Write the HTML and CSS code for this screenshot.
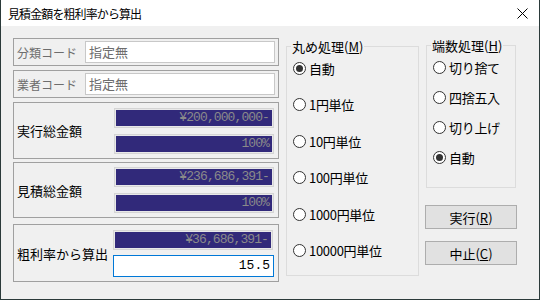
FILE: index.html
```html
<!DOCTYPE html>
<html lang="ja">
<head>
  <meta charset="UTF-8" />
  <title>見積金額を粗利率から算出</title>
  <link rel="stylesheet" href="styles.css">
</head>
<body>
  <div class="window">
    <header class="titlebar">
      <span class="title">見積金額を粗利率から算出</span>
      <span class="close">
        <svg width="11" height="11" viewBox="0 0 11 11"><path d="M0.5 0.5L10.5 10.5M10.5 0.5L0.5 10.5" stroke="#000" stroke-width="1" fill="none"/></svg>
      </span>
    </header>

    <div class="content">
      <div class="left">
        <div class="panel code p1">
          <span class="lbl dim">分類コード</span>
          <div class="edit">指定無</div>
        </div>
        <div class="panel code p2">
          <span class="lbl dim">業者コード</span>
          <div class="edit">指定無</div>
        </div>
        <div class="panel amount p3">
          <span class="lbl">実行総金額</span>
          <div class="fields">
            <div class="dark">¥200,000,000-</div>
            <div class="dark">100%</div>
          </div>
        </div>
        <div class="panel amount p4">
          <span class="lbl">見積総金額</span>
          <div class="fields">
            <div class="dark">¥236,686,391-</div>
            <div class="dark">100%</div>
          </div>
        </div>
        <div class="panel amount p5">
          <span class="lbl">粗利率から算出</span>
          <div class="fields">
            <div class="dark">¥36,686,391-</div>
            <div class="edit num focus">15.5</div>
          </div>
        </div>
      </div>

      <fieldset class="group round">
        <legend>丸め処理(<u>M</u>)</legend>
        <label class="radio checked"><span class="dot"></span>自動</label>
        <label class="radio"><span class="dot"></span>1円単位</label>
        <label class="radio"><span class="dot"></span>10円単位</label>
        <label class="radio"><span class="dot"></span>100円単位</label>
        <label class="radio"><span class="dot"></span>1000円単位</label>
        <label class="radio"><span class="dot"></span>10000円単位</label>
      </fieldset>

      <div class="right">
        <fieldset class="group frac">
          <legend>端数処理(<u>H</u>)</legend>
          <label class="radio"><span class="dot"></span>切り捨て</label>
          <label class="radio"><span class="dot"></span>四捨五入</label>
          <label class="radio"><span class="dot"></span>切り上げ</label>
          <label class="radio checked"><span class="dot"></span>自動</label>
        </fieldset>
        <div class="buttons">
          <button class="btn">実行(<u>R</u>)</button>
          <button class="btn">中止(<u>C</u>)</button>
        </div>
      </div>
    </div>
  </div>
</body>
</html>
```

FILE: styles.css
```css
* {
  box-sizing: border-box;
  font-family: "Noto Sans CJK JP", "Noto Sans", sans-serif;
}
body {
  margin: 0;
  background: #f0f0f0;
  color: #000;
}
.window {
  width: 540px;
  height: 300px;
  background: #f0f0f0;
  border: 1px solid #2b3a3a;
  border-top: none;
  overflow: hidden;
}
.titlebar {
  height: 26px;
  background: #fff;
  display: flex;
  align-items: center;
  justify-content: space-between;
  padding: 0 11px 0 7px;
}
.title {
  font-size: 12px;
  letter-spacing: -0.9px;
}
.close {
  display: flex;
  margin-top: 1px;
}
.content {
  display: flex;
  align-items: flex-start;
  padding-left: 12px;
}
.left {
  width: 266px;
  display: flex;
  flex-direction: column;
  padding-top: 12px;
}
.panel {
  border: 1px solid #a0a0a0;
  display: flex;
  align-items: center;
  justify-content: space-between;
  padding: 0 3px 0 3px;
}
.p1 { height: 28px; }
.p2 { height: 28px; margin-top: 4px; }
.p3 { height: 57px; margin-top: 4px; }
.p4 { height: 56px; margin-top: 3px; }
.p5 { height: 58px; margin-top: 6px; }
.lbl {
  font-size: 13px;
}
.lbl.dim {
  color: #6d6d6d;
  font-size: 12px;
}
.edit {
  width: 190px;
  height: 22px;
  background: #fff;
  border: 1px solid #c8c8c8;
  font-size: 13px;
  color: #6d6d6d;
  line-height: 20px;
  padding-left: 3px;
}
.fields {
  display: flex;
  flex-direction: column;
  gap: 6px;
  padding-right: 1px;
}
.dark {
  width: 160px;
  height: 20px;
  background: #31297a;
  border: 1px solid #d4d4d4;
  box-shadow: inset 0 0 0 1px #e8e8e8;
  color: #8a8a8a;
  font-family: "Liberation Mono", "DejaVu Sans Mono", monospace;
  font-size: 13px;
  letter-spacing: -0.9px;
  line-height: 18px;
  text-align: right;
  padding-right: 4px;
}
.p5 .fields {
  gap: 5px;
}
.edit.num {
  width: 161px;
  color: #000;
  font-family: "Liberation Mono", "DejaVu Sans Mono", monospace;
  font-size: 13px;
  text-align: right;
  padding-right: 3px;
}
.edit.focus {
  border-color: #0078d7;
}
.group {
  margin: 0;
  border: 1px solid #dcdcdc;
  padding: 0 0 0 6px;
  display: flex;
  flex-direction: column;
}
.group legend {
  font-size: 13px;
  padding: 0 1px;
  margin-left: -2px;
  line-height: 17px;
}
.round {
  width: 133px;
  height: 238px;
  margin: 12px 0 0 7px;
  gap: 20.6px;
  padding-top: 5px;
}
.right {
  display: flex;
  flex-direction: column;
  margin-left: 7px;
}
.frac {
  width: 90px;
  height: 151px;
  margin-top: 11px;
  gap: 14px;
  padding-top: 5px;
}
.radio {
  display: flex;
  align-items: center;
  height: 16px;
  font-size: 13px;
  letter-spacing: -0.3px;
}
.dot {
  width: 13px;
  height: 13px;
  border: 1px solid #333;
  border-radius: 50%;
  background: #fff;
  margin-right: 3px;
  display: flex;
  align-items: center;
  justify-content: center;
}
.radio.checked .dot::after {
  content: "";
  width: 7px;
  height: 7px;
  border-radius: 50%;
  background: #333;
}
.buttons {
  display: flex;
  flex-direction: column;
  gap: 12px;
  margin-top: 17px;
  margin-left: -1px;
}
.btn {
  width: 92px;
  height: 24px;
  background: #e1e1e1;
  border: 1px solid #adadad;
  font-size: 13px;
  padding: 0;
  color: #000;
}
```
